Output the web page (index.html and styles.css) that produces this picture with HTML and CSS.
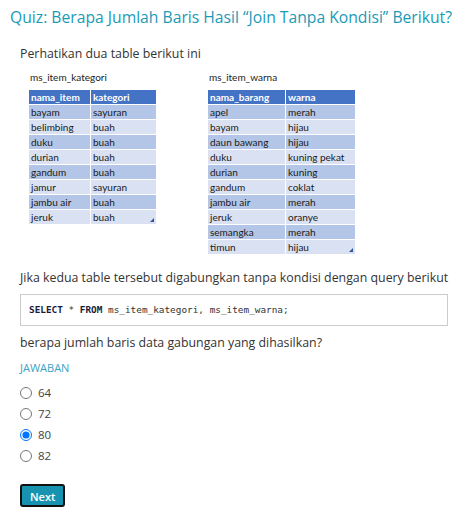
FILE: index.html
```html
<!DOCTYPE html>
<html>
<head>
<meta charset="utf-8">
<link rel="stylesheet" href="styles.css">
</head>
<body>
<div class="quiz">
  <h1 class="title">Quiz: Berapa Jumlah Baris Hasil “Join Tanpa Kondisi” Berikut?</h1>
  <div class="content">
    <p class="text intro">Perhatikan dua table berikut ini</p>
    <div class="tables">
      <div class="xl xl-left">
        <div class="xl-name">ms_item_kategori</div>
        <table class="sheet sheet-left">
          <tr class="head"><td>nama_item</td><td>kategori</td></tr>
          <tr><td>bayam</td><td>sayuran</td></tr>
          <tr><td>belimbing</td><td>buah</td></tr>
          <tr><td>duku</td><td>buah</td></tr>
          <tr><td>durian</td><td>buah</td></tr>
          <tr><td>gandum</td><td>buah</td></tr>
          <tr><td>jamur</td><td>sayuran</td></tr>
          <tr><td>jambu air</td><td>buah</td></tr>
          <tr><td>jeruk</td><td class="last">buah<span class="handle"></span></td></tr>
        </table>
      </div>
      <div class="xl xl-right">
        <div class="xl-name">ms_item_warna</div>
        <table class="sheet sheet-right">
          <tr class="head"><td>nama_barang</td><td>warna</td></tr>
          <tr><td>apel</td><td>merah</td></tr>
          <tr><td>bayam</td><td>hijau</td></tr>
          <tr><td>daun bawang</td><td>hijau</td></tr>
          <tr><td>duku</td><td>kuning pekat</td></tr>
          <tr><td>durian</td><td>kuning</td></tr>
          <tr><td>gandum</td><td>coklat</td></tr>
          <tr><td>jambu air</td><td>merah</td></tr>
          <tr><td>jeruk</td><td>oranye</td></tr>
          <tr><td>semangka</td><td>merah</td></tr>
          <tr><td>timun</td><td class="last">hijau<span class="handle"></span></td></tr>
        </table>
      </div>
    </div>
    <p class="text join">Jika kedua table tersebut digabungkan tanpa kondisi dengan query berikut</p>
    <pre class="code"><b>SELECT</b> * <b>FROM</b> ms_item_kategori, ms_item_warna;</pre>
    <p class="text ask">berapa jumlah baris data gabungan yang dihasilkan?</p>
    <div class="answer-label">JAWABAN</div>
    <ul class="options">
      <li><label><input type="radio" name="a"><span>64</span></label></li>
      <li><label><input type="radio" name="a"><span>72</span></label></li>
      <li><label><input type="radio" name="a" checked><span>80</span></label></li>
      <li><label><input type="radio" name="a"><span>82</span></label></li>
    </ul>
    <button class="next">Next</button>
  </div>
</div>
</body>
</html>
```

FILE: styles.css
```css
html, body {
  margin: 0;
  padding: 0;
  background: #ffffff;
}
body {
  font-family: "Open Sans", "Liberation Sans", sans-serif;
  color: #333333;
}
.quiz {
  padding: 6px 10px 0 10px;
}
.title {
  margin: 0;
  font-size: 15.7px;
  font-weight: 400;
  color: #1b9ab6;
  line-height: 22px;
  white-space: nowrap;
}
.content {
  padding: 0 10px;
}
.text {
  margin: 0;
  font-size: 12.35px;
  line-height: 16px;
  color: #333333;
  white-space: nowrap;
}
.intro {
  margin-top: 18px;
}
.tables {
  display: flex;
  margin-top: 9px;
  padding-left: 8px;
}
.xl-left {
  width: 179px;
}
.xl-name {
  font-family: "Lato", "Liberation Sans", sans-serif;
  font-size: 10px;
  line-height: 12px;
  color: #222222;
  padding-left: 2px;
  margin-bottom: 6px;
}
.sheet {
  border-collapse: collapse;
  font-family: "Lato", "Liberation Sans", sans-serif;
  font-size: 10px;
  color: #1a1a1a;
}
.sheet td {
  height: 14px;
  padding: 0 2px;
  border: 1px solid #ffffff;
  line-height: 13px;
  white-space: nowrap;
}
.sheet tr:nth-child(even) td {
  background: #b4c6e7;
}
.sheet tr:nth-child(odd) td {
  background: #d9e1f2;
}
.sheet tr.head td {
  background: #4472c4;
  color: #ffffff;
  font-weight: 700;
}
.sheet-left td:first-child { width: 57px; }
.sheet-left td:last-child { width: 61px; }
.sheet-right td:first-child { width: 73px; }
.sheet-right td:last-child { width: 65px; }
.last {
  position: relative;
}
.handle {
  position: absolute;
  right: 2px;
  bottom: 2px;
  width: 0;
  height: 0;
  border-left: 4px solid transparent;
  border-bottom: 4px solid #2f5597;
}
.join {
  margin-top: 15px;
}
.code {
  margin: 8px 0 0 0;
  border: 1px solid #cccccc;
  padding: 9px 8px;
  font-family: "DejaVu Sans Mono", "Liberation Mono", monospace;
  font-size: 9.4px;
  line-height: 12px;
  color: #333333;
}
.code b {
  color: #1c1c3a;
}
.ask {
  margin-top: 9px;
}
.answer-label {
  margin-top: 10px;
  font-size: 11px;
  line-height: 14px;
  color: #3aa3c4;
}
.options {
  list-style: none;
  margin: 10px 0 0 0;
  padding: 0;
}
.options li {
  height: 21px;
}
.options label {
  display: flex;
  align-items: center;
  gap: 6px;
  font-size: 11.5px;
  color: #444444;
}
.options input {
  margin: 0;
  width: 12px;
  height: 12px;
}
.next {
  margin-top: 15px;
  background: #1793b0;
  color: #ffffff;
  border: 2px solid #111111;
  border-radius: 3px;
  font-family: "Open Sans", "Liberation Sans", sans-serif;
  font-size: 11px;
  font-weight: 600;
  padding: 3px 8px;
  height: 23px;
}
```
